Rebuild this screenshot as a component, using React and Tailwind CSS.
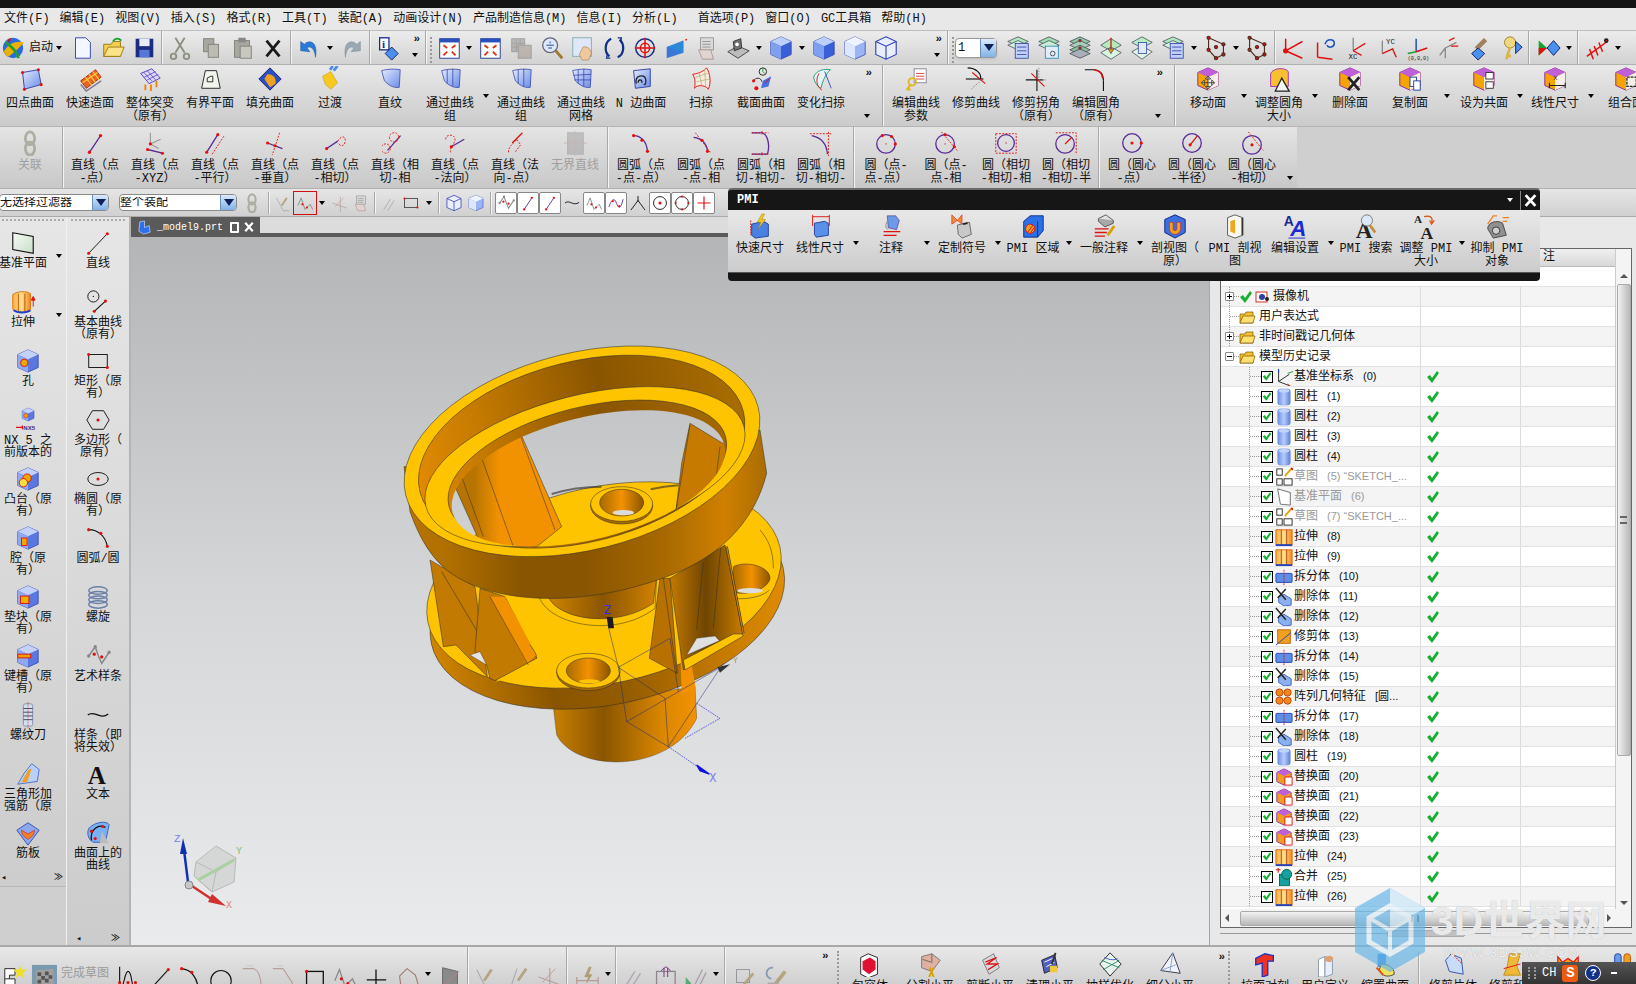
import React from "react";

const R = "#e01010";
const P = "#5a2a96";
const d = (x, y, r = 1.7) => <circle cx={x} cy={y} r={r} fill={R} />;
const cubeBody = (a = "#8fa8f0", b = "#5a78e0", c = "#c4d2fa") => (
  <>
    <path d="M14 2 25 7 25 21 14 26 3 21 3 7Z" fill={b} stroke="#3040a8" strokeWidth=".8" />
    <path d="M14 2 25 7 14 12 3 7Z" fill={c} />
    <path d="M3 7 14 12 14 26 3 21Z" fill={a} />
  </>
);
const faceCube = (extra) => (
  <>
    <path d="M14 2 25 7 25 21 14 26 3 21 3 7Z" fill="#f6a400" stroke="#8a2aa0" strokeWidth="1" />
    <path d="M14 2 25 7 14 12 3 7Z" fill="#c060d8" />
    <path d="M14 12 25 7 25 21 14 26Z" fill="#f4f0e8" />
    {extra}
  </>
);
const sheet = (extra) => (
  <>
    <path d="M5 5C12 3 19 3 25 4L24 23C17 24 12 20 8 16Z" fill="url(#sheetG)" stroke="#3040a8" strokeWidth=".8" />
    {extra}
  </>
);
const arc = (s) => <path d={s} fill="none" stroke={P} strokeWidth="1.4" />;
const dash = (s) => <path d={s} fill="none" stroke={R} strokeWidth="1" strokeDasharray="2 1.5" />;
const ln = (s, c = P, w = 1.4) => <path d={s} fill="none" stroke={c} strokeWidth={w} />;

const I = {
  start: (<><circle cx="14" cy="14" r="11" fill="#2a6ae0" /><path d="M4 18C10 8 18 6 26 8 20 14 14 20 8 24Z" fill="#f0b000" /><path d="M6 8C12 12 18 18 20 25" stroke="#20a030" strokeWidth="3" fill="none" /><path d="M8 5 12 3 10 9Z" fill={R} /></>),
  doc: (<path d="M7 3H18L23 8V25H7Z" fill="#f4f6ff" stroke="#3040a8" />),
  open: (<><path d="M4 10H12L14 7H22V23H4Z" fill="#f2cf50" stroke="#9a7a10" /><path d="M4 23 9 13H26L22 23Z" fill="#fae48a" stroke="#9a7a10" /><path d="M14 7C16 3 20 3 23 6" stroke="#18a030" strokeWidth="2" fill="none" /></>),
  save: (<><rect x="5" y="4" width="19" height="20" fill="#1c2c80" /><rect x="9" y="4" width="11" height="8" fill="#e8ecf8" /><rect x="9" y="16" width="11" height="8" fill="#5878d8" /></>),
  cut: (<g stroke="#8a9080" strokeWidth="2" fill="none"><path d="M9 3 19 19M19 3 9 19" /><circle cx="7" cy="23" r="3" /><circle cx="21" cy="23" r="3" /></g>),
  copy: (<><rect x="6" y="4" width="11" height="14" fill="#a8a8a0" stroke="#808078" /><rect x="11" y="10" width="11" height="14" fill="#bcbcb4" stroke="#808078" /></>),
  paste: (<><rect x="6" y="6" width="16" height="18" fill="#a8a8a0" stroke="#808078" /><rect x="10" y="3" width="8" height="5" fill="#888" /><rect x="12" y="12" width="12" height="13" fill="#c8c8c0" stroke="#808078" /></>),
  x: (<path d="M7 6 21 23M21 6 7 23" stroke="#1a1a1a" strokeWidth="3" />),
  undo: (<path d="M9 10C15 4 24 8 21 24 20 14 15 11 12 14L15 18 5 17 5 7Z" fill="#2a7ad8" stroke="#1a4aa0" strokeWidth=".5" />),
  redo: (<path d="M19 10C13 4 4 8 7 24 8 14 13 11 16 14L13 18 23 17 23 7Z" fill="#9aa8b4" stroke="#788" strokeWidth=".5" />),
  info: (<><rect x="5" y="3" width="10" height="13" fill="#fff" stroke="#1a2a90" strokeWidth="1.4" /><text x="7.5" y="14" fontSize="12" fontWeight="700" fill="#1a2a90" fontFamily="Liberation Serif">i</text><path d="M18 13 25 20 18 27 11 20Z" fill="#4a90f0" stroke="#10205a" /></>),
  fit: (<><rect x="4" y="4" width="21" height="21" fill="#fff" stroke="#1a3a90" /><rect x="4" y="4" width="21" height="4" fill="#2a50c0" /><path d="M8 11 12 14M21 11 17 14M8 22 12 18M21 22 17 18" stroke="#e03010" strokeWidth="2" /></>),
  grid: (<g opacity=".6"><rect x="4" y="4" width="14" height="14" fill="#9a9a9a" stroke="#777" /><path d="M9 4V18M13 4V18M4 9H18M4 13H18" stroke="#777" /><rect x="11" y="11" width="14" height="14" fill="#a89a90" stroke="#777" /></g>),
  zoom: (<><circle cx="12" cy="11" r="8" fill="#dce8fa" stroke="#667" strokeWidth="1.4" /><path d="M8 11H16M12 7V9M10 14H14" stroke="#1a3a90" /><path d="M18 17 25 25" stroke="#a07a30" strokeWidth="3" /></>),
  pan: (<><rect x="3" y="3" width="20" height="20" fill="#dfe8f8" stroke="#8aa" /><path d="M14 13C18 12 22 14 23 20L20 27H13L10 21Z" fill="#f0c8a0" stroke="#a07040" strokeWidth=".6" /></>),
  rotate: (<g fill="none" stroke="#10308a" strokeWidth="2.4"><path d="M20 5C26 10 25 21 18 24" /><path d="M9 23C3 18 4 7 11 4" /><path d="M18 3 22 3 21 8M10 25 6 25 7 20" strokeWidth="1.4" /></g>),
  rotp: (<g fill="none" strokeWidth="1.6"><circle cx="14" cy="14" r="10" stroke="#10308a" /><path d="M14 3V25M3 14H25" stroke={R} /><circle cx="14" cy="14" r="5" stroke={R} /></g>),
  persp: (<><path d="M4 13 22 6V19L4 25Z" fill="#3a78d8" /><path d="M4 13 16 9 22 6 22 19Z" fill="#1a9ad8" opacity=".5" />{d(25, 5, 1)}</>),
  layerBox: (<g opacity=".7" stroke="#777" fill="#d8d8d8"><rect x="7" y="3" width="14" height="13" /><path d="M9 7H18M9 10H18M9 13H18" /><path d="M5 16 18 16 21 26 9 26Z" fill="#e4d4d0" stroke="#a07a70" /></g>),
  shade: (<><path d="M3 18 14 12 26 17 14 25Z" fill="#bcbcbc" stroke="#444" /><path d="M9 7 17 4 18 14 10 17Z" fill="#707070" stroke="#333" /><circle cx="13" cy="10" r="2" fill="#fff" /></>),
  cubeS: cubeBody("#7fa0ee", "#3a60d8", "#bcd0fa"),
  cubeL: cubeBody("#dce6fc", "#9ab4f4", "#eef4ff"),
  cubeW: (<g fill="none" stroke="#3040b8" strokeWidth="1.2"><path d="M14 2 25 7 25 21 14 26 3 21 3 7Z" fill="#e8eefc" /><path d="M3 7 14 12 25 7M14 12V26" /></g>),
  layer1: (<g stroke="#445" strokeWidth=".8"><path d="M14 2 25 7 14 12 3 7Z" fill="#b0e8c0" /><path d="M3 11 14 16 25 11 14 6Z" fill="#d0f4dc" /><rect x="11" y="9" width="14" height="16" fill="#c0d0f8" stroke="#2030a0" /><path d="M13 13H23M13 17H23M13 21H23" stroke="#2030a0" /></g>),
  layer2: (<g stroke="#445" strokeWidth=".8"><path d="M14 2 25 7 14 12 3 7Z" fill="#a0dcb4" /><path d="M3 11 14 16 25 11 14 6Z" fill="#c8ecd4" /><rect x="10" y="12" width="14" height="13" fill="#e0ecf8" stroke="#1080a8" /><circle cx="18" cy="20" r="2.5" fill="none" stroke="#222" /></g>),
  layer3: (<g stroke="#445" strokeWidth=".8"><path d="M14 2 25 7 14 12 3 7Z" fill="#90c8a4" /><path d="M3 11 14 16 25 11 14 6Z" fill="#a8d0b8" /><path d="M3 16 14 21 25 16 14 11Z" fill="#8ac098" /><path d="M3 20 14 25 25 20 14 15Z" fill="#a8b0b8" />{d(14, 6, 1.4)}{d(14, 14, 1.4)}</g>),
  layer4: (<g stroke="#445" strokeWidth=".8"><path d="M14 4 25 11 14 17 3 11Z" fill="#b0ecbc" /><path d="M14 13 25 19 14 26 3 19Z" fill="#d8f6e0" /><path d="M14 3V18" stroke={R} strokeWidth="1.4" /><path d="M11 15 14 20 17 15Z" fill="#f0a000" /></g>),
  layer5: (<g stroke="#445" strokeWidth=".8"><path d="M14 2 25 8 14 14 3 8Z" fill="#b8ecc4" /><path d="M14 12 25 18 14 26 3 18Z" fill="#e0f6e6" /><rect x="10" y="8" width="9" height="12" fill="#e0e8fc" stroke="#2040a0" /></g>),
  wire: (<g fill="none" stroke="#4a2a20" strokeWidth="1.2"><path d="M6 3 22 10 22 21 14 25 6 16Z" />{d(6, 3)}{d(22, 10)}{d(22, 21)}{d(14, 25)}{d(6, 16)}{d(14, 13)}</g>),
  csys1: (<g fill="none" strokeWidth="1.6" stroke={R}><path d="M5 17 23 7M5 17 23 25" /><path d="M5 4V17" />{d(5, 17, 2)}</g>),
  csys2: (<g fill="none" strokeWidth="1.6" stroke={R}><path d="M6 24V8M6 24 22 26" /><path d="M14 10C16 3 24 4 24 9S18 14 16 11" stroke="#1c50c0" /></g>),
  csys3: (<g fill="none" strokeWidth="1.4"><path d="M11 17V3" stroke="#888" /><path d="M11 17 24 9" stroke={R} /><path d="M11 17 20 22" stroke={R} /><text x="6" y="26" fontSize="8" fill="#222" stroke="none">XC</text></g>),
  csys4: (<g fill="none" strokeWidth="1.4"><path d="M9 20V6" stroke="#888" /><path d="M9 20 20 15 24 24" stroke={R} /><text x="13" y="10" fontSize="8" fill="#222" stroke="none">YC</text></g>),
  csys5: (<g fill="none" strokeWidth="1.6"><path d="M12 18V4" stroke="#1c50c0" /><path d="M12 18 24 14" stroke={R} /><path d="M12 18 3 20" stroke="#18a030" /><text x="3" y="27" fontSize="5.5" fill="#222" stroke="none">(0,0,0)</text></g>),
  csys6: (<g fill="none" strokeWidth="1.4"><path d="M10 14V25M10 14 22 8M10 14 4 22" stroke="#888" /><path d="M14 6 20 3M16 12 24 12" stroke={R} /></g>),
  wcs: (<><path d="M10 15 20 5" stroke="#a08060" strokeWidth="5" /><path d="M12 14 19 20 12 27 5 20Z" fill="#4a90f0" stroke="#10205a" /></>),
  key: (<><circle cx="13" cy="8" r="6" fill="#f0d880" stroke="#a08020" /><path d="M13 13 9 26M9 22 14 23" stroke="#d8b840" strokeWidth="3" /><path d="M19 7 26 13 19 20Z" fill="#4a90f0" stroke="#10205a" /></>),
  play: (<><path d="M4 6 13 14 4 22Z" fill="#18a030" /><path d="M4 14 13 14 4 22Z" fill={R} /><path d="M20 6 27 14 20 22 13 14Z" fill="#4a90f0" stroke="#10205a" /></>),
  ant: (<g stroke="#1a1a2a" strokeWidth="1.6" fill="none"><path d="M3 23 25 7M10 26 6 15M15 22 11 12M20 18 16 8" stroke={R} />{d(24, 6)}</g>),
  chain: (<g fill="none" stroke="#9a9a8a" strokeWidth="3"><ellipse cx="14" cy="9" rx="5" ry="7" /><ellipse cx="14" cy="20" rx="5" ry="7" /></g>),
  fourpt: (<><path d="M6 7 23 4 26 20 8 25Z" fill="url(#sheetG)" stroke="#3040a8" />{d(6, 7)}{d(23, 4)}{d(26, 20)}{d(8, 25)}</>),
  quick: (<><path d="M4 16 20 4 26 12 10 24Z" fill="#f06020" stroke="#a03010" /><path d="M9 12 16 21M13 9 20 18M17 6 24 15M6 18 22 7" stroke="#f8d040" strokeWidth="1.2" /><path d="M4 20 10 27 26 16" fill="none" stroke="#7a7a90" strokeWidth="1.5" /></>),
  global: (<><path d="M4 8 16 3 25 13 13 19Z" fill="#d8d8fa" stroke="#5a3ac0" /><path d="M7 6.5 16 16M11 5 20 15M8 12 20 6M11 15 23 9" stroke="#5a3ac0" strokeWidth=".8" /><path d="M9 20V26M15 20V27M21 16V23" stroke="#f08010" strokeWidth="2" /></>),
  bounded: (<><path d="M5 24 9 5H21L25 24Z" fill="#f0f4ec" stroke="#222" /><path d="M11 17V13L15 11H17V17Z" fill="none" stroke="#222" /></>),
  fill: (<><path d="M14 2 26 14 14 26 2 14Z" fill="#2a50c0" stroke="#102080" /><path d="M11 9C17 8 21 13 20 19L14 23 8 14Z" fill="#f0a020" /></>),
  blend: (<><path d="M6 11 15 6 22 18 15 25 9 20Z" fill="#f6c820" stroke="#c09010" strokeWidth=".5" /><path d="M14 4 17 0M18 5 22 0" stroke="#4a8ae0" strokeWidth="3" /></>),
  ruled: sheet(),
  thru: sheet(ln("M11 4V19M17 3V22", "#3040a8", 0.8)),
  mesh: sheet(ln("M11 4V19M17 3V22M6 10 25 9M7 15 25 15", "#3040a8", 0.8)),
  nside: (<><path d="M6 5 24 3 24 22 8 24Z" fill="url(#sheetG)" stroke="#3040a8" /><path d="M9 19C6 10 18 8 19 14S18 20 17 20M11 18C11 14 15 14 15 18" fill="none" stroke="#222" strokeWidth="1.4" /></>),
  sweep: (<><path d="M5 9C12 8 18 5 20 2 24 8 25 18 22 25 18 20 10 20 7 24 8 18 8 14 5 9Z" fill="#f6eae0" stroke={R} /><path d="M8 12 21 8M9 17 23 14M12 7 15 22M18 5 19 21" stroke="#aa6" strokeWidth=".7" /></>),
  section: (<><circle cx="16" cy="6" r="4" fill="none" stroke="#222" /><path d="M16 2V6L18 8" stroke="#18a030" fill="none" /><path d="M6 16C8 12 14 12 15 17" stroke="#222" fill="none" />{d(6, 16)}{d(9, 24, 2.2)}<path d="M16 16 25 11 22 22 14 24Z" fill="#4a70e0" /><path d="M18 18 23 14" stroke={R} /></>),
  varsweep: (<><path d="M6 12C9 4 18 3 24 4 20 8 16 14 14 24 10 22 7 18 6 12Z" fill="#e8f4fa" stroke="#18a070" /><path d="M12 8C8 14 9 22 15 26" fill="none" stroke={R} /><path d="M18 6 25 24" stroke="#3050c0" /></>),
  editcp: (<><rect x="12" y="3" width="13" height="15" fill="#fff" stroke="#889" /><path d="M14 8H23M14 11H23M14 14H23" stroke="#d84040" /><circle cx="10" cy="17" r="4" fill="none" stroke="#e0b820" strokeWidth="2" /><path d="M8 20 4 26M5 24 8 26" stroke="#e0b820" strokeWidth="2.4" /></>),
  trimc: (<><path d="M3 14H22" stroke="#111" strokeWidth="1.2" /><path d="M5 2C14 2 20 8 19 14" fill="none" stroke="#111" strokeWidth="1.2" /><path d="M19 14C18 20 12 20 9 25" fill="none" stroke="#888" strokeDasharray="2 1.5" /><path d="M10 7 24 19" stroke={R} strokeWidth="1.2" /></>),
  trimk: (<><path d="M3 15H22M15 4V27" stroke="#111" strokeWidth="1.2" /><path d="M9 8 23 22" stroke={R} strokeWidth="1.2" /><path d="M17 2V13M17 15H25" stroke="#888" strokeDasharray="1.5 1.5" /></>),
  editf: (<><path d="M2 4H11C19 4 22 9 22 16" fill="none" stroke="#111" strokeWidth="1.2" /><path d="M12 4C18 5 21 9 21 13" fill="none" stroke={R} strokeWidth="1.6" /><path d="M22 16V27" stroke="#111" strokeWidth="1.2" /></>),
  moveF: faceCube(<path d="M14 11V25M7 18H21M14 11 11 14H17ZM14 25 11 22H17ZM7 18 10 15V21ZM21 18 18 15V21Z" fill="#eee" stroke="#222" strokeWidth=".8" />),
  resize: (<><path d="M5 8C8 2 20 1 24 6V22H5Z" fill="#f6c030" stroke="#a82ac0" /><path d="M17 13 25 27H10Z" fill="#f4f4f4" stroke="#222" strokeWidth="1.4" /></>),
  delF: faceCube(<path d="M12 12 24 26M24 12 12 26" stroke="#222" strokeWidth="3" />),
  copyF: faceCube(<><rect x="14" y="12" width="7" height="10" fill="#fff" stroke="#2040a0" /><rect x="18" y="16" width="7" height="10" fill="#fff" stroke="#2040a0" /></>),
  coplanar: faceCube(<><rect x="16" y="7" width="8" height="7" fill="#fff" stroke="#333" /><rect x="16" y="17" width="8" height="7" fill="#fff" stroke="#333" /></>),
  lineDim: faceCube(<><text x="12" y="15" fontSize="8" fill="#222">x</text><path d="M8 21H25M8 18V24M25 18V24" stroke="#222" strokeWidth="1.2" /></>),
  combF: faceCube(<rect x="15" y="12" width="10" height="10" fill="none" stroke="#222" strokeWidth="1.4" strokeDasharray="3 1" />),
  ptpt: (<>{ln("M8 24 20 6")}{d(8, 24, 1.8)}{d(20, 6, 1.8)}</>),
  lxyz: (<><path d="M9 15V3M9 15 20 10M9 15 18 20" stroke="#999" strokeWidth="1.2" fill="none" />{ln("M6 21 22 25")}{d(6, 21)}{d(22, 25)}{d(9, 15)}</>),
  lpar: (<>{ln("M5 24 17 5")}{d(5, 24)}{d(17, 5)}{dash("M11 26 24 6")}</>),
  lperp: (<>{ln("M6 14 22 20")}{d(6, 14)}{d(14, 17)}{dash("M19 3 11 27")}</>),
  ltan: (<>{ln("M5 20 17 12")}{d(5, 20)}{dash("M17 12C20 6 26 6 25 12S20 18 17 14")}</>),
  ltt: (<>{ln("M6 22 20 6")}{dash("M9 20A5 5 0 1 1 9 19.9M18 8A5 5 0 1 1 18 7.9")}</>),
  lpn: (<>{ln("M10 18 24 10")}{dash("M4 10C4 4 14 4 14 10S6 20 10 25")}{d(10, 18)}</>),
  lnp: (<>{dash("M7 24C7 16 14 14 16 10L20 16 14 24")}{ln("M11 14 22 3", R)}</>),
  linf: (<g opacity=".55"><rect x="6" y="3" width="17" height="23" fill="#8a8a8a" stroke="#777" /><path d="M2 14H27M14 1V28" stroke="#a07a70" /></g>),
  a3p: (<>{ln("M6 6C14 6 20 12 21 23")}{d(6, 6)}{d(15, 11)}{d(21, 23)}</>),
  a2p: (<>{ln("M6 8C14 9 20 14 21 23")}{dash("M8 3 24 24")}{d(15, 11)}{d(21, 23)}</>),
  a2t: (<>{ln("M4 3H14C21 3 24 16 21 26H4")}{dash("M4 3H22M4 26H22M15 1V5M15 24V28")}</>),
  a2t2: (<>{ln("M4 6C14 8 20 14 21 26")}{dash("M2 4H25M22 2V28")}</>),
  c3p: (<><circle cx="14" cy="15" r="10" fill="none" stroke={P} strokeWidth="1.4" />{d(10, 6)}{d(20, 7)}{d(24, 15)}{d(14, 15, .7)}</>),
  c2pt: (<><circle cx="13" cy="15" r="10" fill="none" stroke={P} strokeWidth="1.4" />{d(13, 5)}{d(23, 18)}{d(13, 15, .7)}{dash("M9 2 26 22")}</>),
  c3t: (<><circle cx="14" cy="14" r="9" fill="none" stroke={P} strokeWidth="1.4" />{dash("M3 4H25V25H3Z")}{d(14, 14, .7)}</>),
  c2tr: (<><circle cx="13" cy="15" r="10" fill="none" stroke={P} strokeWidth="1.4" />{dash("M3 3H25V25")}{ln("M13 15 20 8", R)}</>),
  cp: (<><circle cx="14" cy="14" r="10" fill="none" stroke={P} strokeWidth="1.4" />{d(14, 14)}{d(24, 14)}</>),
  cr: (<><circle cx="14" cy="14" r="10" fill="none" stroke={P} strokeWidth="1.4" />{ln("M12 16 20 6", R)}{d(12, 16)}</>),
  ct: (<><circle cx="14" cy="16" r="10" fill="none" stroke={P} strokeWidth="1.4" />{d(14, 16)}{dash("M10 2 26 22")}</>),
  // left bars
  datum: (<path d="M5 2 27 6 27 24 5 20Z" transform="translate(-2 1)" fill="url(#datumG)" stroke="#111" strokeWidth="1.2" />),
  extrude: (<><path d="M3 6C8 2 18 2 22 5V22C18 26 8 26 3 22Z" fill="url(#extG)" stroke="#e07000" /><path d="M9 5V24M16 5V24" stroke="#c05000" /><path d="M4 23C8 26 18 26 22 23" stroke="#2040c0" strokeWidth="2" fill="none" /><path d="M25 10V19M23 12 25 8 27 12Z" stroke={R} fill={R} /></>),
  hole: (<>{cubeBody()}<circle cx="10" cy="16" r="4" fill="#f0a800" stroke={R} /></>),
  nx5: (<><g transform="translate(6 0) scale(.58)">{cubeBody()}<circle cx="10" cy="16" r="4" fill="#f0a800" stroke={R} /></g><path d="M1 22H8M8 20V24" stroke={R} strokeWidth="1.4" /><text x="9" y="25" fontSize="6.5" fontWeight="700" fill="#303090" fontFamily="Liberation Sans">NX5</text></>),
  boss: (<>{cubeBody()}<circle cx="13" cy="13" r="4.5" fill="#f0a800" stroke={R} /><circle cx="9" cy="18" r="4.5" fill="#f6e040" stroke={R} /></>),
  pocket: (<>{cubeBody()}<rect x="7" y="14" width="6" height="8" fill="#f0a800" stroke={R} /></>),
  pad: (<>{cubeBody()}<rect x="6" y="13" width="9" height="8" fill="#f0b000" stroke={R} /></>),
  slot: (<>{cubeBody()}<rect x="3" y="12" width="14" height="4" fill="#f0a000" stroke={R} /></>),
  thread: (<><rect x="9" y="2" width="10" height="24" rx="2" fill="#d4e0f0" stroke="#8090b0" /><path d="M9 7H19M9 11H19M9 15H19M9 19H19" stroke="#445" /><path d="M14 0V28" stroke={R} strokeWidth=".6" strokeDasharray="2 1" /></>),
  gusset: (<><path d="M18 3 26 9 24 22 3 25 10 13Z" fill="#b8d0f8" stroke="#4a70c8" /><path d="M14 10 18 8 13 23H7Z" fill="#f0a020" /></>),
  rib: (<><path d="M14 2 26 10 14 26 2 10Z" transform="translate(0 1)" fill="#8ea8ec" stroke="#3050b0" /><path d="M7 11 14 15 21 11 20 16 14 21 8 16Z" fill="#f08020" stroke={R} strokeWidth=".6" /></>),
  sline: (<>{ln("M4 25 24 4", "#111", 1)}{d(4, 25)}{d(24, 4)}</>),
  sbasic: (<><circle cx="9" cy="8" r="6" fill="none" stroke="#111" /><circle cx="9" cy="8" r=".7" fill="#111" />{ln("M10 24 22 13", "#111", 1.2)}{d(10, 24)}{d(22, 13)}</>),
  srect: (<><rect x="4" y="7" width="20" height="14" fill="none" stroke="#111" />{d(4, 7)}{d(24, 21)}</>),
  spoly: (<><path d="M8 4H20L26 14 20 24H8L2 14Z" fill="none" stroke="#111" />{d(14, 14)}</>),
  sell: (<><ellipse cx="14" cy="14" rx="11" ry="7" fill="none" stroke="#111" />{d(14, 14)}</>),
  sarc: (<>{ln("M4 5C14 5 22 12 24 23", "#111", 1.2)}{d(4, 5)}{d(17, 9)}{d(24, 23)}</>),
  helix: (<g fill="none" stroke="#6a80a8" strokeWidth="1.6"><ellipse cx="14" cy="7" rx="10" ry="4" /><ellipse cx="14" cy="12" rx="10" ry="4" /><ellipse cx="14" cy="17" rx="10" ry="4" /><ellipse cx="14" cy="22" rx="10" ry="4" /></g>),
  art: (<><path d="M4 14 11 4 14 13 18 22 26 10" fill="none" stroke="#888" strokeWidth="1.6" />{d(10, 12)}{d(18, 15)}<circle cx="4" cy="14" r="1.8" fill="#888" /><circle cx="11" cy="4" r="1.8" fill="#888" /><circle cx="26" cy="10" r="1.8" fill="#888" /></>),
  spline: (<path d="M3 14C10 8 16 20 25 13" fill="none" stroke="#111" strokeWidth="1.4" />),
  stext: (<text x="3" y="25" fontSize="27" fontWeight="700" fill="#111" fontFamily="Liberation Serif">A</text>),
  curveOn: (<><path d="M4 9C12 1 24 1 26 5L22 24 9 24C3 21 2 14 4 9Z" fill="#7ab0f0" stroke="#3060c0" /><path d="M18 12 26 25H16Z" fill="#bcbcbc" /><path d="M7 22C5 10 15 4 22 8" fill="none" stroke="#111" strokeWidth="1.4" />{d(7, 12)}{d(19, 7)}{d(11, 20)}</>),
  // selection bar
  arch: (<path d="M3 25 14 10 25 25M14 3V12" fill="none" stroke="#111" strokeWidth="1.4" />),
  scirc: (<><circle cx="14" cy="14" r="10" fill="none" stroke="#111" strokeWidth="1.4" />{d(14, 14, 2.4)}</>),
  socto: (<><circle cx="14" cy="14" r="10" fill="none" stroke="#111" strokeWidth="1.4" />{d(14, 4)}{d(24, 14)}{d(14, 24)}{d(4, 14)}</>),
  scross: (<path d="M14 4V24M4 14H24" stroke={R} strokeWidth="1.8" />),
  swave: (<><path d="M3 20C8 6 12 6 15 15S22 22 25 8" fill="none" stroke={P} strokeWidth="1.4" />{d(9, 11)}{d(19, 19)}</>),
  // pmi
  rapid: (<><path d="M5 12 18 9 23 12V25L9 27 5 24Z" fill="#4a80e0" stroke="#2040a0" /><path d="M16 1 11 10H15L12 17 20 7H16L19 1Z" fill="#f0c820" stroke="#a08010" strokeWidth=".5" /><path d="M4 8V24" stroke={R} strokeDasharray="2 1" /></>),
  lindim: (<><path d="M8 11 19 9 23 11V24L10 26 8 23Z" fill="#5a90e8" stroke="#2040a0" /><path d="M6 2V14M6 4H24M24 2V14" stroke={R} /></>),
  note: (<><path d="M10 3 19 3 23 8 20 18 11 16Z" fill="#6a9ae8" stroke="#405" strokeWidth=".5" /><path d="M10 9C7 14 9 17 11 18" stroke="#888" fill="none" /><path d="M6 20H24M6 24H20" stroke={R} strokeWidth="1.4" /></>),
  symbol: (<><path d="M3 2 9 8 3 12ZM14 2 9 8 14 12Z" fill="#f09030" stroke={R} strokeWidth=".6" /><path d="M9 13 22 10 24 23 14 27 10 23Z" fill="#c8c8c8" stroke="#666" /><path d="M15 12 20 11" stroke="#222" strokeWidth="2" /></>),
  region: (<><path d="M4 9 11 3H25V19L19 26H4Z" fill="#2a70e8" stroke="#103080" /><path d="M19 9V26" stroke="#103080" /><circle cx="11" cy="17" r="5" fill="#f0a020" stroke={R} /><path d="M8 21 14 13M11 22 15 16" stroke={R} /></>),
  gnote: (<><path d="M8 6 16 2 24 8 15 13Z" fill="#e0e0e0" stroke="#555" /><path d="M8 6V9L15 15 24 11V8" fill="#a8a8a8" stroke="#555" /><path d="M4 17H19M4 21H17M4 25H15" stroke={R} strokeWidth="1.4" /><path d="M18 24 25 14" stroke="#d8a000" strokeWidth="3" /></>),
  secview: (<><path d="M14 2 25 7 25 21 14 27 3 21 3 7Z" fill="#3a70e0" stroke="#102080" /><path d="M8 10V17A6 6 0 0 0 20 17V10H16V17A2 2 0 0 1 12 17V10Z" fill="#f0a020" stroke={R} strokeWidth=".6" /></>),
  pmisec: (<><path d="M6 5 14 2 22 5V24L14 27 6 24Z" fill="#f8f8f0" stroke="#555" /><path d="M9 9 14 7V22L9 20Z" fill="#f0a818" /><path d="M22 5V24" stroke="#333" strokeWidth="2" /></>),
  aa: (<><text x="2" y="14" fontSize="15" fontWeight="700" fill="#1a2a90" fontFamily="Liberation Sans">A</text><text x="9" y="25" fontSize="24" fontWeight="700" fontStyle="italic" fill="#1a2ad0" fontFamily="Liberation Sans">A</text><path d="M7 27H25" stroke="#1a2ad0" /></>),
  asearch: (<><text x="3" y="27" fontSize="25" fontWeight="700" fill="#222" fontFamily="Liberation Serif">A</text><circle cx="15" cy="8" r="6" fill="#dce8f8" stroke="#777" /><path d="M18 13 24 21" stroke="#c09040" strokeWidth="3" /></>),
  aresize: (<><text x="1" y="11" fontSize="12" fontWeight="700" fill="#222" fontFamily="Liberation Serif">A</text><path d="M12 4C18 2 22 5 20 10M18 8 20 12 23 8" stroke="#e05010" strokeWidth="1.4" fill="none" /><text x="8" y="28" fontSize="19" fontWeight="700" fill="#222" fontFamily="Liberation Serif">A</text></>),
  suppress: (<><path d="M4 17C4 10 14 7 20 11L24 24 10 27Z" fill="#909090" stroke="#444" /><circle cx="13" cy="19" r="4" fill="#d0d0d0" stroke="#333" /><path d="M4 12 10 3H14M20 5H27M20 9H25" stroke="#f08020" strokeWidth="1.4" fill="none" /></>),
  // bottom
  sketchS: (<><path d="M3 5H14V12H8V16H14V27H3Z" fill="#fff" stroke="#222" /><path d="M3 16H8" stroke="#222" /><path d="M19 1 21 6 27 6 22 10 24 15 19 12 15 15 16 10 12 6 18 6Z" fill="#f0e020" /></>),
  flag: (<><rect x="1" y="1" width="27" height="27" fill="#7a9ab0" /><path d="M5 7 24 5 25 21 6 24Z" fill="#a0a0a0" /><path d="M7 9H11V13H7ZM15 8H19V12H15ZM11 13H15V17H11ZM19 12H23V16H19ZM7 17H11V21H7ZM15 16H19V20H15Z" fill="#555" /></>),
  bcurve: (<>{ln("M5 3V27C10 27 10 8 14 8 19 8 17 27 22 27", "#111", 1.2)}{d(5, 20)}{d(14, 20)}{d(22, 20)}</>),
  bline: (<>{ln("M4 28 24 6", "#111", 1.2)}{d(24, 6)}</>),
  barc: (<>{ln("M5 5C15 6 22 14 23 28", "#111", 1.4)}{d(5, 5)}{d(16, 9)}</>),
  bcir: (<circle cx="14" cy="18" r="11" fill="none" stroke="#111" strokeWidth="1.2" />),
  bfil: (<g opacity=".6">{ln("M4 5H16C21 7 24 13 24 28", "#a07a70", 1.2)}{ln("M8 2H16", "#bbb", 1)}</g>),
  bfil2: (<g opacity=".6">{ln("M3 5H14L24 20V28", "#a07a70", 1.2)}{ln("M8 2H14", "#bbb", 1)}</g>),
  brect: (<><rect x="6" y="8" width="18" height="18" fill="none" stroke="#111" strokeWidth="1.4" />{d(6, 8)}{d(24, 26)}</>),
  bart: (<><path d="M3 18 8 6 14 24 22 16 26 24" fill="none" stroke="#888" strokeWidth="1.4" />{d(10, 16)}{d(17, 21)}</>),
  bplus: (<path d="M14 6V28M4 17H25" stroke="#111" strokeWidth="1.4" />),
  bprof: (<path d="M6 13 14 5 23 12 26 22 18 28H8Z" fill="none" stroke="#a07a70" strokeWidth="1.2" />),
  bplane: (<><path d="M6 4 22 8V28L6 28Z" fill="#8a8a8a" stroke="#666" />{ln("M6 24 24 8", "#c08080", 1)}</>),
  bdim1: (<g opacity=".7">{ln("M4 6 14 26H24", "#888", 1)}<path d="M12 18 20 6" stroke="#a89060" strokeWidth="3" /></g>),
  bdim2: (<g opacity=".7">{ln("M14 5 7 26H24", "#888", 1)}<path d="M15 18 24 5" stroke="#a89060" strokeWidth="3" /></g>),
  bdim3: (<g opacity=".7">{ln("M4 14 26 22M16 4V28", "#a07a70", 1)}{ln("M22 5 8 20", "#c08080", 1)}</g>),
  bdim4: (<g opacity=".8">{ln("M3 18H26M3 14V28M26 14V28", "#a07a70", 1)}<path d="M16 3 11 14H15L13 22 20 11H16L19 3Z" fill="#a89060" /></g>),
  bcon1: (<g opacity=".7">{ln("M6 24 16 8M12 26 22 10", "#a090a0", 1.4)}</g>),
  bcon2: (<g opacity=".8"><rect x="6" y="8" width="20" height="22" fill="none" stroke="#807080" strokeWidth="1.4" /><path d="M14 4V14M18 4V14M11 7 16 3 21 7" fill="none" stroke="#606" strokeWidth="1" /></g>),
  bcon3: (<g opacity=".8"><path d="M4 14V28L10 21Z" fill="#38a060" />{ln("M14 22 22 6M18 25 26 9", "#a090a0", 1.4)}</g>),
  bedit1: (<g opacity=".7"><rect x="6" y="6" width="14" height="14" fill="none" stroke="#777" /><rect x="4" y="24" width="8" height="6" fill="#777" /><path d="M14 22 24 10" stroke="#a89060" strokeWidth="3" /></g>),
  bedit2: (<g opacity=".7"><path d="M12 4A6 6 0 1 0 10 16" fill="none" stroke="#6a80a8" strokeWidth="2" /><path d="M14 22 25 8" stroke="#a89060" strokeWidth="4" /><rect x="6" y="20" width="12" height="10" fill="#9a9a9a" /></g>),
  bwrap: (<><path d="M4 7 12 3 22 7 22 25 12 29 4 25Z" fill="#fff" stroke="#222" /><path d="M6 11 14 7 20 11 20 20 13 25 6 20Z" fill="#e01030" /></>),
  bsplit: (<><path d="M5 6 16 3 25 10 16 22 5 18Z" fill="#e0b0a0" stroke="#777" /><path d="M6 9 15 12M16 3V13" stroke="#666" /><path d="M14 18 18 28M18 18 13 28" stroke="#d8a000" strokeWidth="2" /></>),
  bcutf: (<><path d="M6 10 18 3 24 18 13 25Z" fill="#d8d8e0" stroke="#777" /><path d="M9 12 21 7 11 14 22 14 12 20" fill="none" stroke={R} strokeWidth="1.4" /></>),
  bclean: (<><path d="M5 10 19 4 22 18 8 24Z" fill="#5060c0" stroke="#222" /><path d="M8 12 17 8M10 17 19 12" stroke="#fff" /><path d="M20 2 16 14" stroke="#333" strokeWidth="2" /><rect x="14" y="16" width="8" height="7" fill="#f0c840" /></>),
  bsample: (<><path d="M14 2 26 14 14 27 3 14Z" fill="#e8f4f0" stroke="#222" /><path d="M5 10 24 18M7 20 24 10" stroke="#2a8a60" /><path d="M8 7C14 10 20 10 22 8" stroke="#3050c0" fill="none" /></>),
  bsubdiv: (<><path d="M17 2 25 24 4 21Z" fill="#f0f4fa" stroke="#334" /><path d="M17 2 14 22M4 21 20 15" stroke="#8aa0d0" /></>),
  bdraft: (<><path d="M4 8 14 3 23 5V11H17V26L11 28V13L4 15Z" fill="#f03020" stroke="#2030c0" strokeWidth="1.4" /></>),
  bcustom: (<><path d="M7 9 14 6V28H7Z" fill="#fff" stroke="#89a" /><path d="M14 6 22 9V25L14 28Z" fill="#e8eefc" stroke="#89a" /><path d="M14 8C16 4 22 4 23 8L20 12 14 11Z" fill="#e0a070" /></>),
  bbend: (<><rect x="6" y="3" width="9" height="14" fill="#3a80e0" /><path d="M10 14C16 14 24 17 24 25 17 29 10 27 8 20Z" fill="#f0e060" stroke="#444" /><path d="M5 18 12 26" stroke="#e05010" strokeWidth="2" /></>),
  btrim: (<><path d="M12 3 23 8 25 25 10 22 6 10Z" fill="#c8dcf8" stroke="#3050a0" /><path d="M13 3 24 14" stroke={R} strokeDasharray="2 1" /></>),
  btrimx: (<><path d="M10 3H22L18 16 22 26H4L8 16Z" fill="#f0b838" stroke="#c09010" /><path d="M4 19 22 14" stroke={R} /></>),
  bred: (<path d="M3 6 8 12 14 8 20 12 25 6V24H3Z" fill="#f0a020" stroke={R} strokeWidth="1.2" />),
  bcol: (<><rect x="5" y="3" width="7" height="24" rx="3" fill="#6a9ae8" stroke="#2040a0" /><rect x="15" y="3" width="7" height="24" rx="3" fill="#f0a020" stroke="#c05000" /></>),
  // tree
  csysT: (<g fill="none" strokeWidth="1.1"><path d="M4 3V16L16 8M4 16 17 21" stroke="#333" /><path d="M14 7 20 5" stroke="#18a030" /><path d="M14 19 19 23" stroke={R} /><path d="M4 2V6" stroke="#1040c0" /></g>),
  cylT: (<><rect x="3" y="2" width="14" height="18" rx="3" fill="url(#cylT)" stroke="#7090e0" strokeWidth=".6" /><ellipse cx="10" cy="4" rx="6" ry="2" fill="#c0d4fa" /></>),
  sketchT: (<><rect x="2" y="2" width="6" height="7" fill="#fff" stroke="#222" /><rect x="2" y="13" width="6" height="7" fill="#fff" stroke="#222" /><rect x="10" y="13" width="9" height="7" fill="#fff" stroke="#222" /><path d="M11 10 18 2" stroke="#e0a000" strokeWidth="2" /><path d="M18 1 20 3" stroke={R} strokeWidth="2" /></>),
  datumT: (<path d="M3 2 17 6 17 20 6 19Z" fill="#fff" stroke="#666" strokeWidth="1" />),
  extT: (<><rect x="1" y="3" width="18" height="17" fill="url(#extG)" stroke="#e06000" /><path d="M7 3V20M13 3V20" stroke="#b04000" /><path d="M1 20H19" stroke="#2040c0" strokeWidth="2" /></>),
  splitT: (<><rect x="1" y="7" width="18" height="10" rx="1" fill="#5a90e8" stroke="#2040c0" /><path d="M10 3V20" stroke={R} strokeDasharray="2 1" /></>),
  delT: (<><path d="M10 8 18 13 18 20 10 21 4 17 4 11Z" fill="#8ab0f0" stroke="#4060c0" /><path d="M1 1 12 14M12 2 3 12" stroke="#222" strokeWidth="1.6" /></>),
  trimT: (<><rect x="3" y="3" width="14" height="15" fill="#f0a020" stroke="#c06000" /><path d="M1 20 18 6" stroke="#2040c0" /></>),
  arrT: (<>{[[5, 6], [14, 6], [5, 15], [14, 15]].map(([x, y]) => <circle key={x + "-" + y} cx={x} cy={y} r="4" fill="#f08820" stroke="#c04000" />)}</>),
  faceT: (<><path d="M10 2 18 6 18 16 10 20 2 16 2 6Z" fill="#f0a020" stroke="#8a2aa0" /><path d="M10 2 18 6 10 10 2 6Z" fill="#c060d8" /><path d="M11 11H19V20H11Z" fill="#fff" stroke={R} /></>),
  uniteT: (<><rect x="5" y="8" width="11" height="13" fill="#18a0a0" stroke="#063" /><circle cx="13" cy="8" r="5.5" fill="#18a0a0" stroke="#063" /><path d="M1 3H6M3.5 1V6" stroke={R} strokeWidth="1.2" /></>),
};

function Ic({ k, s = 26, className = "" }) {
  return (
    <svg viewBox="0 0 28 28" className={className} width={s} height={s}>
      {I[k]}
    </svg>
  );
}

// tree icons use a 20 box
function Tc({ k }) {
  return (
    <svg viewBox="0 0 20 22" width="18" height="20">
      {I[k]}
    </svg>
  );
}

function Caret({ className = "" }) {
  return <span className={`block w-0 h-0 border-x-[3px] border-t-[4px] border-x-transparent border-t-black ${className}`} />;
}

function CloseX({ s = 12 }) {
  return (
    <svg viewBox="0 0 12 12" width={s} height={s}>
      <path d="M1.5 1 10.5 11M10.5 1 1.5 11" stroke="#fff" strokeWidth="2.6" />
    </svg>
  );
}

function Sep({ dotted }) {
  return (
    <span className="flex h-full flex-none">
      <span className="w-px h-full bg-[#a8a8a8]" />
      <span className="w-px h-full bg-[#f4f4f4]" />
      {dotted && <span className="ml-[3px] mt-[6px] h-[80%] border-l-2 border-dotted border-[#999]" />}
    </span>
  );
}

function Item({ label, k, dim, top = "h-[32px]", w = "w-[60px]" }) {
  return (
    <div className={`flex-none ${w} flex flex-col items-center`}>
      <div className={`${top} flex items-start justify-center ${dim ? "opacity-70" : ""}`}>
        <Ic k={k} />
      </div>
      <div className={`text-[12px] leading-[12.5px] text-center whitespace-pre-line ${dim ? "text-[#a0a0a0]" : "text-[#111]"}`}>{label}</div>
    </div>
  );
}

function Row({ items, top }) {
  return items.map((it, i) => {
    if (it.gap !== undefined)
      return (
        <div key={i} className={`flex-none ${it.gap} self-stretch -mt-[3px] flex ${it.center ? "justify-center" : "justify-end"}`}>
          {it.sep && <Sep dotted={it.dotted} />}
        </div>
      );
    if (it.more)
      return (
        <div key={i} className={`flex-none ${it.more} self-stretch relative`}>
          <span className="absolute right-[8px] top-[1px] text-[11px] leading-[12px] font-bold">»</span>
          <Caret className="absolute right-[10px] bottom-[8px]" />
        </div>
      );
    if (it.caret)
      return (
        <div key={i} className={`flex-none ${it.caret} pt-[28px] flex justify-center`}>
          <Caret />
        </div>
      );
    return <Item key={i} top={top} {...it} />;
  });
}

const it = (label, k, extra = {}) => ({ label, k, ...extra });
const C = { caret: "w-[11px]" };

const row1 = [
  it("四点曲面", "fourpt"), it("快速造面", "quick"), it("整体突变\n（原有）", "global"), it("有界平面", "bounded"), it("填充曲面", "fill"), it("过渡", "blend"), it("直纹", "ruled"),
  it("通过曲线\n组", "thru"), C, it("通过曲线\n组", "thru"), it("通过曲线\n网格", "mesh"), it("N 边曲面", "nside"), it("扫掠", "sweep"), it("截面曲面", "section"), it("变化扫掠", "varsweep"),
  { more: "w-[29px]" }, { gap: "w-[6px]", sep: true, center: true },
  it("编辑曲线\n参数", "editcp"), it("修剪曲线", "trimc"), it("修剪拐角\n（原有）", "trimk"), it("编辑圆角\n（原有）", "editf"),
  { more: "w-[45px]" }, { gap: "w-[7px]", sep: true, center: true },
  it("移动面", "moveF"), C, it("调整圆角\n大小", "resize"), C, it("删除面", "delF"), it("复制面", "copyF"), { caret: "w-[14px]" }, it("设为共面", "coplanar"), C, it("线性尺寸", "lineDim"), C, it("组合面", "combF"),
];

const row2 = [
  it("关联", "chain", { dim: true }), { gap: "w-[5px]", sep: true, center: true },
  it("直线（点\n-点）", "ptpt"), it("直线（点\n-XYZ）", "lxyz"), it("直线（点\n-平行）", "lpar"), it("直线（点\n-垂直）", "lperp"), it("直线（点\n-相切）", "ltan"), it("直线（相\n切-相", "ltt"), it("直线（点\n-法向）", "lpn"), it("直线（法\n向-点）", "lnp"), it("无界直线", "linf", { dim: true }),
  { gap: "w-[6px]", sep: true, center: true },
  it("圆弧（点\n-点-点）", "a3p"), it("圆弧（点\n-点-相", "a2p"), it("圆弧（相\n切-相切-", "a2t"), it("圆弧（相\n切-相切-", "a2t2"),
  { gap: "w-[5px]", sep: true, center: true },
  it("圆（点-\n点-点）", "c3p"), it("圆（点-\n点-相", "c2pt"), it("圆（相切\n-相切-相", "c3t"), it("圆（相切\n-相切-半", "c2tr"),
  { gap: "w-[6px]", sep: true, center: true },
  it("圆（圆心\n-点）", "cp"), it("圆（圆心\n-半径）", "cr"), it("圆（圆心\n-相切）", "ct"),
];

const pmi = [
  it("快速尺寸", "rapid"), it("线性尺寸", "lindim"), C, it("注释", "note"), C, it("定制符号", "symbol"), C, it("PMI 区域", "region"), C, it("一般注释", "gnote"), C, it("剖视图（\n原）", "secview"), it("PMI 剖视\n图", "pmisec"), it("编辑设置", "aa"), C, it("PMI 搜索", "asearch"), it("调整 PMI\n大小", "aresize"), C, it("抑制 PMI\n对象", "suppress"),
];

const leftA = [
  ["基准平面", "datum"], ["拉伸", "extrude"], ["孔", "hole"], ["NX 5 之\n前版本的", "nx5"], ["凸台（原\n有）", "boss"], ["腔（原\n有）", "pocket"], ["垫块（原\n有）", "pad"], ["键槽（原\n有）", "slot"], ["螺纹刀", "thread"], ["三角形加\n强筋（原", "gusset"], ["筋板", "rib"],
];
const leftB = [
  ["直线", "sline"], ["基本曲线\n（原有）", "sbasic"], ["矩形（原\n有）", "srect"], ["多边形（\n原有）", "spoly"], ["椭圆（原\n有）", "sell"], ["圆弧/圆", "sarc"], ["螺旋", "helix"], ["艺术样条", "art"], ["样条（即\n将失效）", "spline"], ["文本", "stext"], ["曲面上的\n曲线", "curveOn"],
];

const T = (k) => ({ k });
const G = (w, sep = true, dotted = false) => ({ g: w, sep, dotted });
const CR = (w = "w-[12px]") => ({ cr: w });
const top = [
  G("w-[5px]"), T("cut"), T("copy"), T("paste"), T("x"), G("w-[5px]"), T("undo"), CR(), T("redo"), G("w-[5px]"), T("info"),
  { mm: "w-[20px]" }, G("w-[10px]", true, true), T("fit"), CR("w-[10px]"), T("fit"), T("grid"), T("zoom"), T("pan"), T("rotate"), T("rotp"), T("persp"), T("layerBox"), T("shade"), CR(), T("cubeS"), CR(), T("cubeS"), T("cubeL"), T("cubeW"), { mm: "w-[44px]" }, G("w-[10px]", true, true),
  { combo: true }, G("w-[5px]", false), T("layer1"), T("layer2"), T("layer3"), T("layer4"), T("layer5"), T("layer1"), CR(), T("wire"), CR("w-[10px]"), T("wire"), G("w-[6px]"),
  T("csys1"), T("csys2"), T("csys3"), T("csys4"), T("csys5"), T("csys6"), T("wcs"), T("key"), G("w-[6px]"), T("play"), CR(), G("w-[6px]"), T("ant"), CR(),
];

function Toolbar({ data, s = 26, up = "" }) {
  return data.map((t, i) => {
    if (t.k) return <div key={i} className="flex-none w-[31px] flex justify-center"><Ic k={t.k} s={s} /></div>;
    if (t.g) return <div key={i} className={`flex-none ${t.g} ${up} self-stretch flex justify-center`}>{t.sep && <Sep dotted={t.dotted} />}</div>;
    if (t.cr) return <div key={i} className={`flex-none ${t.cr} flex justify-center self-center`}><Caret /></div>;
    if (t.mm)
      return (
        <div key={i} className={`flex-none ${t.mm} self-stretch relative`}>
          <span className="absolute right-[3px] top-[2px] text-[11px] leading-[12px] font-bold">»</span>
          <Caret className="absolute right-[5px] bottom-[7px]" />
        </div>
      );
    if (t.combo)
      return (
        <div key={i} className="flex-none w-[42px] h-[20px] flex items-center bg-white rounded-sm border border-[#999] shadow-sm">
          <span className="pl-[2px] text-[12px] flex-1 leading-none">1</span>
          <ComboBtn />
        </div>
      );
    return null;
  });
}

function ComboBtn() {
  return (
    <span className="w-[16px] h-full flex items-center justify-center bg-gradient-to-b from-[#dcebfb] to-[#7fb2e6] border-l border-[#6a90b8]">
      <span className="block w-0 h-0 border-x-[5px] border-t-[7px] border-x-transparent border-t-[#10205a]" />
    </span>
  );
}

function Combo({ text, className }) {
  return (
    <div className={`flex-none h-[17px] flex items-center bg-white rounded-sm border border-[#8a8a8a] overflow-hidden ${className}`}>
      <span className="flex-1 text-[12px] leading-none whitespace-nowrap overflow-hidden">{text}</span>
      <ComboBtn />
    </div>
  );
}

function Small({ k, boxed, red }) {
  return (
    <div className={`flex-none w-[22px] h-[22px] flex items-center justify-center ${boxed ? "bg-white border border-[#888] rounded-[2px]" : ""} ${red ? "outline outline-1 outline-[#d01010]" : ""}`}>
      <Ic k={k} s={18} />
    </div>
  );
}

const hist = [
  ["基准坐标系", "(0)", "csysT"], ["圆柱", "(1)", "cylT"], ["圆柱", "(2)", "cylT"], ["圆柱", "(3)", "cylT"], ["圆柱", "(4)", "cylT"],
  ["草图", "(5) “SKETCH_...", "sketchT", 1], ["基准平面", "(6)", "datumT", 1], ["草图", "(7) “SKETCH_...", "sketchT", 1],
  ["拉伸", "(8)", "extT"], ["拉伸", "(9)", "extT"], ["拆分体", "(10)", "splitT"], ["删除体", "(11)", "delT"], ["删除体", "(12)", "delT"], ["修剪体", "(13)", "trimT"], ["拆分体", "(14)", "splitT"], ["删除体", "(15)", "delT"],
  ["阵列几何特征", "[圆...", "arrT"], ["拆分体", "(17)", "splitT"], ["删除体", "(18)", "delT"], ["圆柱", "(19)", "cylT"],
  ["替换面", "(20)", "faceT"], ["替换面", "(21)", "faceT"], ["替换面", "(22)", "faceT"], ["替换面", "(23)", "faceT"],
  ["拉伸", "(24)", "extT"], ["合并", "(25)", "uniteT"], ["拉伸", "(26)", "extT"],
];

function Tick({ s = 14 }) {
  return (
    <svg viewBox="0 0 14 14" width={s} height={s}>
      <path d="M1 7 4 5 6 8 11 1 13 3 6 13Z" fill="#18b030" />
    </svg>
  );
}

function Folder() {
  return (
    <svg viewBox="0 0 17 16" width="17" height="16" className="flex-none">
      <path d="M1 5H6L7 3H14V14H1Z" fill="#f0c030" stroke="#805800" strokeWidth=".7" />
      <path d="M1 14 4 7H16L14 14Z" fill="#ffe070" stroke="#805800" strokeWidth=".7" />
    </svg>
  );
}

function Exp({ minus }) {
  return (
    <span className="relative block flex-none w-[9px] h-[9px] bg-white border border-[#888] rounded-[1px]">
      <span className="absolute left-[1px] right-[1px] top-[3px] h-px bg-black" />
      {!minus && <span className="absolute top-[1px] bottom-[1px] left-[3px] w-px bg-black" />}
    </span>
  );
}

function TreeRow({ odd, children, tick }) {
  return (
    <div className={`flex h-[20px] flex-none border-b border-[#e2e2e2] ${odd ? "bg-[#f4f4f4]" : "bg-white"}`}>
      <div className="relative w-[200px] flex-none flex items-center border-r border-[#dcdcdc] text-[12px] whitespace-nowrap overflow-hidden">{children}</div>
      <div className="w-[100px] flex-none border-r border-[#dcdcdc] flex items-center pl-[5px]">{tick && <Tick />}</div>
      <div className="flex-1" />
    </div>
  );
}

function Chk() {
  return (
    <span className="flex-none w-[12px] h-[12px] bg-white border border-black flex items-center justify-center">
      <Tick s={11} />
    </span>
  );
}

function Vline() {
  return <span className="absolute left-[8px] top-0 h-full border-l border-dotted border-[#999]" />;
}

const bottomIcons = [
  T("bcurve"), T("bline"), T("barc"), T("bcir"), T("bfil"), T("bfil2"), T("brect"), T("bart"), T("bplus"), T("bprof"), CR(), T("bplane"), G("w-[5px]"),
  T("bdim1"), T("bdim2"), T("bdim3"), G("w-[8px]"), T("bdim4"), CR(), G("w-[3px]"), T("bcon1"), T("bcon2"), T("bcon3"), CR(), G("w-[6px]"), T("bedit1"), T("bedit2"),
];

const orange = { y: "#ffc400", o: "#f39200", l: "#2c2c2c" };

function Model() {
  return (
    <svg viewBox="0 0 1320 1380" className="absolute left-[249px] top-[93px] w-[440px] h-[460px]">
      <defs>
        <linearGradient id="bandG" gradientUnits="userSpaceOnUse" x1="72" x2="1165" y1="0" y2="0">
          <stop offset="0" stopColor="#b87400" /><stop offset=".12" stopColor="#b07000" /><stop offset=".32" stopColor="#8a5500" /><stop offset=".5" stopColor="#8a5500" /><stop offset=".72" stopColor="#a86a00" /><stop offset=".88" stopColor="#d08000" /><stop offset="1" stopColor="#a86c00" />
        </linearGradient>
        <linearGradient id="wallG" gradientUnits="userSpaceOnUse" x1="110" x2="1100" y1="0" y2="0">
          <stop offset="0" stopColor="#e08a00" /><stop offset=".2" stopColor="#c87c00" /><stop offset=".6" stopColor="#8a5500" /><stop offset="1" stopColor="#a86c00" />
        </linearGradient>
        <linearGradient id="flangeG" gradientUnits="userSpaceOnUse" x1="145" x2="1220" y1="0" y2="0">
          <stop offset="0" stopColor="#d08400" /><stop offset=".3" stopColor="#8a5500" /><stop offset=".5" stopColor="#945c00" /><stop offset=".8" stopColor="#c87c00" /><stop offset="1" stopColor="#e08c00" />
        </linearGradient>
        <linearGradient id="cylG" gradientUnits="userSpaceOnUse" x1="520" x2="950" y1="0" y2="0">
          <stop offset="0" stopColor="#c88000" /><stop offset=".35" stopColor="#8a5500" /><stop offset=".75" stopColor="#d88600" /><stop offset="1" stopColor="#f39200" />
        </linearGradient>
        <linearGradient id="colG" gradientUnits="userSpaceOnUse" x1="225" x2="450" y1="0" y2="0">
          <stop offset="0" stopColor="#b87400" /><stop offset=".25" stopColor="#b87400" /><stop offset=".6" stopColor="#f39200" /><stop offset="1" stopColor="#f39200" />
        </linearGradient>
        <linearGradient id="holeG" x1="0" x2="1" y1="0" y2="0">
          <stop offset="0" stopColor="#a86a00" /><stop offset=".5" stopColor="#f39200" /><stop offset="1" stopColor="#8a5500" />
        </linearGradient>
        <linearGradient id="ribDark" gradientUnits="userSpaceOnUse" x1="870" x2="1085" y1="0" y2="0">
          <stop offset="0" stopColor="#c47a00" /><stop offset=".5" stopColor="#6e4500" /><stop offset="1" stopColor="#c47a00" />
        </linearGradient>
        <mask id="ringHole" maskUnits="userSpaceOnUse" x="0" y="0" width="1320" height="1380">
          <rect width="1320" height="1380" fill="#fff" />
          <ellipse cx="625" cy="445" rx="420" ry="183" transform="rotate(-14 625 445)" fill="#000" />
        </mask>
      </defs>
      {/* lower cylinder */}
      <path d="M520 1130 530 1215C590 1330 870 1330 950 1165L945 1070Z" fill="url(#cylG)" stroke={orange.l} strokeWidth="1" />
      {/* flange */}
      <g stroke={orange.l} strokeWidth="1.5">
        <ellipse cx="682" cy="828" rx="540" ry="295" transform="rotate(-12 682 828)" fill="url(#flangeG)" />
        <ellipse cx="672" cy="765" rx="540" ry="295" transform="rotate(-12 672 765)" fill={orange.y} />
      </g>
      <path d="M515 492C560 478 610 470 665 470M812 478C840 472 870 468 895 466" stroke={orange.l} strokeWidth="6" fill="none" opacity=".6" />
      {/* top boss */}
      <g stroke={orange.l} strokeWidth="1.5">
        <ellipse cx="725" cy="528" rx="93" ry="54" fill="#a86a00" />
        <ellipse cx="725" cy="522" rx="93" ry="52" fill={orange.y} />
        <ellipse cx="725" cy="518" rx="66" ry="40" fill="url(#holeG)" />
      </g>
      <ellipse cx="730" cy="548" rx="32" ry="8" fill="#dcdcdc" />
      {/* bottom boss */}
      <g stroke={orange.l} strokeWidth="1.5">
        <ellipse cx="625" cy="1028" rx="95" ry="54" fill="#a86a00" />
        <ellipse cx="625" cy="1022" rx="95" ry="52" fill={orange.y} />
        <ellipse cx="625" cy="1022" rx="66" ry="38" fill="url(#holeG)" />
      </g>
      <ellipse cx="628" cy="1054" rx="32" ry="6" fill={orange.y} />
      {/* right hole */}
      <path d="M1060 710C1100 690 1170 710 1170 745 1165 780 1090 800 1060 785Z" fill="url(#holeG)" stroke={orange.l} strokeWidth="1.5" />
      <ellipse cx="1110" cy="782" rx="38" ry="8" fill="#dcdcdc" />
      <path d="M1060 805C1100 810 1150 800 1168 780M1140 600C1165 630 1180 660 1180 715" stroke={orange.l} strokeWidth="1.5" fill="none" />
      {/* centre boss */}
      <path d="M478 800C500 880 700 930 825 835L830 740 478 770Z" fill={orange.y} stroke={orange.l} strokeWidth="1.5" />
      <path d="M505 800C530 865 700 900 820 820L830 740 500 770Z" fill="url(#cylG)" stroke={orange.l} strokeWidth="1.5" />
      {/* back columns seen through the ring */}
      <path d="M225 470 310 660 400 660 470 650 545 590 415 295 300 370Z" fill="url(#colG)" stroke={orange.l} strokeWidth="1.5" />
      <path d="M245 440 310 620M300 370 400 650M415 300 525 600" stroke={orange.l} strokeWidth="1.5" fill="none" />
      <path d="M930 280 1045 350 1045 440 885 565 905 400Z" fill="#c67b00" stroke={orange.l} strokeWidth="1.5" />
      <path d="M930 285 885 560M1020 350 1005 470" stroke={orange.l} strokeWidth="1.5" fill="none" />
      {/* ribs under the ring */}
      <path d="M900 940 925 945 948 1080 905 1090Z" fill={orange.o} />
      <path d="M150 690 190 950 228 945 322 1040 285 770Z" fill="#c27a00" stroke={orange.l} strokeWidth="1.5" />
      <path d="M185 725 310 935" stroke={orange.l} strokeWidth="1.5" />
      <path d="M285 965 320 1005 330 1045 345 1052 470 985 375 800 300 775Z" fill="#c27a00" stroke={orange.l} strokeWidth="1.5" />
      <path d="M375 800 470 975 440 1000 330 800Z" fill={orange.o} />
      <path d="M470 985C470 970 460 960 450 945M330 800 445 1005" stroke={orange.l} strokeWidth="1.5" fill="none" />
      <path d="M270 975 300 965 320 1005Z" fill="#e2e3e4" stroke={orange.l} />
      <path d="M840 745 808 985 892 1030 870 745Z" fill="#b87000" stroke={orange.l} strokeWidth="1.5" />
      <path d="M870 745 910 1020 1088 910 1035 645Z" fill="url(#ribDark)" stroke={orange.l} strokeWidth="1.5" />
      <path d="M970 695 950 900M1022 655 1000 895M850 745 890 1030" stroke={orange.l} strokeWidth="1.5" fill="none" />
      <path d="M920 975 950 925 1005 918 1018 932Z" fill="#dfe0e1" stroke={orange.l} />
      <path d="M915 1020 910 990 1060 912 1085 912 1090 918Z" fill={orange.y} stroke={orange.l} strokeWidth="1.5" />
      <path d="M1040 650 1090 910" stroke={orange.l} strokeWidth="7" />
      <path d="M1040 650 1090 910" stroke="#c67b00" strokeWidth="4" />
      <path d="M370 1040 345 1055 390 1045Z" fill={orange.y} />
      {/* ring */}
      <g mask="url(#ringHole)" stroke={orange.l} strokeWidth="1.5">
        <path d="M72 410 90 545C110 600 140 670 200 720 340 830 620 830 860 740 1000 690 1120 590 1160 430L1140 300Z" fill="url(#bandG)" />
        <ellipse cx="606" cy="364" rx="545" ry="296" transform="rotate(-14 606 364)" fill={orange.y} />
        <ellipse cx="605" cy="365" rx="500" ry="271" transform="rotate(-14 605 365)" fill="url(#wallG)" />
        <ellipse cx="615" cy="410" rx="492" ry="215" transform="rotate(-14 615 410)" fill={orange.y} />
        <ellipse cx="622" cy="425" rx="428" ry="194" transform="rotate(-14 622 425)" fill="url(#wallG)" />
      </g>
      {/* datum csys */}
      <g fill="none" stroke="#1c2a78" strokeWidth="1.5">
        <path d="M685 890 715 1012 740 1175 865 1250 1030 1000M715 1012 870 925 895 1085M715 1012 855 1105 865 1250M740 1175 1025 1010" />
      </g>
      <path d="M950 1120 1020 1165 915 1225M865 1250 960 1315" fill="none" stroke="#1a1ae0" strokeWidth="2" strokeDasharray="5 3" />
      <path d="M950 1305 960 1322 988 1332Z" fill="#1010e0" stroke="#1010e0" strokeWidth="4" />
      <path d="M680 860 698 862 702 895 685 895Z" fill="#1c1c1c" />
      <path d="M1012 1012 1050 1003 1020 1028Z" fill="#333" />
      <text x="988" y="1355" fontSize="36" fill="#7a80f0" fontFamily="Liberation Mono">X</text>
      <text x="672" y="852" fontSize="36" fill="#2a2af0" fontFamily="Liberation Mono">Z</text>
      <text x="1058" y="998" fontSize="26" fill="#a09a80" fontFamily="Liberation Mono">Y</text>
    </svg>
  );
}

function Triad() {
  return (
    <svg viewBox="0 0 70 80" className="absolute left-[43px] top-[593px] w-[70px] h-[80px]">
      <g fill="#c8cbc8" fillOpacity=".55" stroke="#b8bab8">
        <path d="M22 32 42 16 62 28 60 52 38 62 20 46Z" />
        <path d="M22 32 42 42 62 28M42 42 38 62M20 46 38 62" fill="none" />
      </g>
      <path d="M24 50 60 30" stroke="#a8d0a0" strokeWidth="3" />
      <path d="M14 52 10 20" stroke="#1030b0" strokeWidth="2.5" />
      <path d="M6 24 9 8 13 24Z" fill="#1030b0" />
      <path d="M18 56 42 72" stroke="#d03030" strokeWidth="2.5" />
      <path d="M38 64 52 76 34 72Z" fill="#d03030" />
      <circle cx="15" cy="55" r="4" fill="#c8c8c8" stroke="#888" />
      <text x="0" y="12" fontSize="11" fill="#8080f0" fontFamily="Liberation Mono">Z</text>
      <text x="62" y="24" fontSize="10" fill="#80c080" fontFamily="Liberation Mono">Y</text>
      <text x="52" y="78" fontSize="10" fill="#e08080" fontFamily="Liberation Mono">X</text>
    </svg>
  );
}

export default function App() {
  return (
    <div className="relative w-[1636px] h-[984px] overflow-hidden flex flex-col bg-[#e4e4e4] text-[#111] font-['Liberation_Mono','Noto_Sans_CJK_SC',monospace]">
      <svg className="absolute w-0 h-0">
        <defs>
          <linearGradient id="sheetG" x1="0" x2="1" y1="0" y2="1"><stop offset="0" stopColor="#e4ecfc" /><stop offset="1" stopColor="#6a8ae8" /></linearGradient>
          <linearGradient id="datumG" x1="0" x2="1" y1="0" y2="1"><stop offset="0" stopColor="#f6faf4" /><stop offset="1" stopColor="#c8e0c8" /></linearGradient>
          <linearGradient id="extG" x1="0" x2="1" y1="0" y2="0"><stop offset="0" stopColor="#f8b040" /><stop offset=".5" stopColor="#fce090" /><stop offset="1" stopColor="#f08820" /></linearGradient>
          <linearGradient id="cylT" x1="0" x2="1" y1="0" y2="0"><stop offset="0" stopColor="#6a90e8" /><stop offset=".5" stopColor="#b8ccf8" /><stop offset="1" stopColor="#5a80e0" /></linearGradient>
        </defs>
      </svg>

      {/* title bar */}
      <div className="h-[8px] flex-none bg-[#141414]" />

      {/* menu */}
      <div className="h-[23px] flex-none flex items-center gap-[10px] pl-[4px] bg-[#e8e8e8] border-b border-[#bdbdbd] text-[12px] whitespace-nowrap">
        {["文件(F)", "编辑(E)", "视图(V)", "插入(S)", "格式(R)", "工具(T)", "装配(A)", "动画设计(N)", "产品制造信息(M)", "信息(I)", "分析(L)"].map((m) => (
          <span key={m}>{m}</span>
        ))}
        <span className="ml-[10px]">首选项(P)</span>
        <span>窗口(O)</span>
        <span>GC工具箱</span>
        <span>帮助(H)</span>
      </div>

      {/* main toolbar */}
      <div className="h-[34px] flex-none flex items-center bg-gradient-to-b from-[#ececec] to-[#d2d2d2] border-b border-[#b0b0b0]">
        <div className="flex-none w-[66px] flex items-center">
          <Ic k="start" s={26} />
          <span className="text-[12px] ml-[3px]">启动</span>
          <Caret className="ml-[3px]" />
        </div>
        <div className="flex-none w-[31px] flex justify-center"><Ic k="doc" /></div>
        <div className="flex-none w-[31px] flex justify-center"><Ic k="open" /></div>
        <div className="flex-none w-[31px] flex justify-center"><Ic k="save" /></div>
        <Toolbar data={top} />
      </div>

      {/* ribbon 1 */}
      <div className="h-[62px] flex-none flex items-start pt-[1px] bg-gradient-to-b from-[#e8e8e8] to-[#cbcbcb] border-b border-[#b4b4b4] whitespace-nowrap overflow-hidden">
        <Row items={row1} />
      </div>

      {/* ribbon 2 */}
      <div className="h-[62px] flex-none flex border-b border-[#b0b0b0] bg-[#cfcfcf] overflow-hidden">
        <div className="flex-none w-[1297px] flex items-start pt-[3px] bg-gradient-to-b from-[#e4e4e4] to-[#c8c8c8] whitespace-nowrap">
          <Row items={row2} top="h-[30px]" />
          <div className="flex-none w-[16px] pt-[46px] flex justify-center"><Caret /></div>
        </div>
      </div>

      {/* selection bar */}
      <div className="h-[28px] flex-none flex items-center bg-gradient-to-b from-[#e6e6e6] to-[#d0d0d0] border-b border-[#aaa] overflow-hidden">
        <Combo text="无选择过滤器" className="w-[110px] -ml-[1px]" />
        <div className="w-[10px] flex-none" />
        <Combo text="整个装配" className="w-[118px]" />
        <div className="flex-none w-[30px] flex justify-center opacity-70"><Ic k="chain" s={20} /></div>
        <div className="flex-none w-[3px] h-[22px] flex justify-center"><Sep /></div>
        <div className="w-[2px] flex-none" />
        <Small k="bdim1" />
        <Small k="bart" red />
        <div className="flex-none w-[12px] flex justify-center"><Caret /></div>
        <Small k="bdim3" />
        <Small k="layerBox" />
        <div className="flex-none w-[6px] h-[22px] flex justify-center"><Sep /></div>
        <Small k="bcon1" />
        <Small k="srect" />
        <div className="flex-none w-[13px] flex justify-center"><Caret /></div>
        <div className="flex-none w-[8px] h-[22px] flex justify-center"><Sep /></div>
        <Small k="cubeW" />
        <Small k="cubeL" />
        <div className="flex-none w-[8px] h-[22px] flex justify-center"><Sep /></div>
        <Small k="art" boxed />
        <Small k="ptpt" boxed />
        <Small k="ptpt" boxed />
        <Small k="spline" />
        <Small k="bart" boxed />
        <Small k="swave" boxed />
        <Small k="arch" />
        <Small k="scirc" boxed />
        <Small k="socto" boxed />
        <Small k="scross" boxed />
      </div>

      {/* main area */}
      <div className="flex-1 min-h-0 flex">
        {/* left bars */}
        <div className="flex-none w-[67px] flex flex-col bg-[#cfcfcf] border-r border-[#f0f0f0]">
          <div className="h-[670px] flex flex-col bg-gradient-to-b from-[#e6e6e6] to-[#cdcdcd] border-b border-[#b8b8b8]">
            <div className="h-[8px] mx-[2px] mt-[2px] border-t-2 border-dotted border-[#aaa] flex-none" />
            {leftA.map(([l, k], i) => (
              <div key={l} className={`relative h-[59px] flex-none flex flex-col items-center ${i < 2 ? "w-[46px]" : "w-[56px]"}`}>
                <div className="h-[31px] flex items-center"><Ic k={k} /></div>
                <div className="text-[12px] leading-[12px] text-center whitespace-pre">{l}</div>
                {i < 2 && <Caret className="absolute left-[56px] top-[27px]" />}
              </div>
            ))}
            <div className="flex justify-between px-[1px] text-[9px] leading-[10px] mt-[-3px]"><span>◂</span><span className="font-bold pr-[2px]">≫</span></div>
          </div>
        </div>
        <div className="flex-none w-[64px] flex flex-col bg-gradient-to-b from-[#e6e6e6] to-[#cccccc] border-r-2 border-[#b4b4b4]">
          <div className="h-[8px] mx-[4px] mt-[2px] border-t-2 border-dotted border-[#aaa] flex-none" />
          {leftB.map(([l, k]) => (
            <div key={l} className="h-[59px] flex-none flex flex-col items-center">
              <div className="h-[31px] flex items-center"><Ic k={k} /></div>
              <div className="text-[12px] leading-[12px] text-center whitespace-pre">{l}</div>
            </div>
          ))}
          <div className="flex-1 flex items-end justify-between px-[9px] pb-[1px] text-[9px] leading-[10px]"><span>◂</span><span className="font-bold">≫</span></div>
        </div>

        {/* viewport */}
        <div className="relative flex-1 min-w-0 flex flex-col bg-[#d8d8d8]">
          <div className="h-[20px] flex-none flex bg-[#dcdcdc] border-b-4 border-[#5a5a5a]">
            <div className="h-[20px] w-[129px] flex-none flex items-center bg-[#5a5a5a] text-white pl-[6px] text-[10px]">
              <svg viewBox="0 0 16 16" width="15" height="15" className="flex-none"><path d="M3 2 8 1V8L13 6 14 13 7 15 2 12Z" fill="#2a70f0" stroke="#cfe0ff" strokeWidth=".7" /></svg>
              <span className="ml-[5px]">_model9.prt</span>
              <span className="ml-[7px] w-[9px] h-[11px] border-2 border-white rounded-[1px] flex-none" />
              <span className="ml-[5px] flex-none"><CloseX s={10} /></span>
            </div>
          </div>
          <div className="relative flex-1 bg-gradient-to-b from-[#b3b5b7] via-[#d5d6d7] to-[#e9ebec]">
            <Model />
            <Triad />
          </div>
        </div>

        {/* right: part navigator */}
        <div className="flex-none w-[427px] flex flex-col bg-[#e8e8e8] border-l border-[#a8a8a8] pl-[10px] pr-[4px] pt-[31px]">
          <div className="h-[680px] flex-none flex flex-col border border-[#666] bg-white">
            <div className="flex-1 min-h-0 flex">
              <div className="w-[394px] flex-none flex flex-col overflow-hidden">
                <div className="h-[18px] flex-none flex bg-gradient-to-b from-[#f0f0f0] to-[#d8d8d8] border-b border-[#bbb] text-[12px] leading-[17px]">
                  <div className="w-[200px] border-r border-[#aaa]" />
                  <div className="w-[100px] border-r border-[#aaa]" />
                  <div className="pl-[22px]">注</div>
                </div>
                <div className="h-[20px] flex-none bg-white border-b border-[#e2e2e2]" />
                <TreeRow odd>
                  <Vline />
                  <span className="relative ml-[4px]"><Exp /></span>
                  <span className="w-[5px] border-t border-dotted border-[#999]" />
                  <Tick />
                  <svg viewBox="0 0 16 16" width="16" height="16" className="ml-[1px] flex-none"><rect x="2" y="3" width="11" height="10" fill="#fff" stroke="#d03020" /><circle cx="8" cy="8" r="3" fill="#3040a0" /><circle cx="13" cy="10" r="2" fill="#222" /></svg>
                  <span className="ml-[3px]">摄像机</span>
                </TreeRow>
                <TreeRow>
                  <Vline />
                  <span className="ml-[9px] w-[9px] border-t border-dotted border-[#999]" />
                  <Folder />
                  <span className="ml-[3px]">用户表达式</span>
                </TreeRow>
                <TreeRow odd>
                  <Vline />
                  <span className="relative ml-[4px]"><Exp /></span>
                  <span className="w-[5px] border-t border-dotted border-[#999]" />
                  <Folder />
                  <span className="ml-[3px]">非时间戳记几何体</span>
                </TreeRow>
                <TreeRow>
                  <span className="relative ml-[4px]"><Exp minus /></span>
                  <span className="w-[5px] border-t border-dotted border-[#999]" />
                  <Folder />
                  <span className="ml-[3px]">模型历史记录</span>
                </TreeRow>
                {hist.map(([n, s, k, dim], i) => (
                  <TreeRow key={i} odd={i % 2 === 0} tick>
                    <span className="absolute left-[28px] top-0 h-full border-l border-dotted border-[#999]" />
                    <span className="ml-[29px] w-[11px] flex-none border-t border-dotted border-[#999]" />
                    <Chk />
                    <span className="w-[21px] flex-none flex justify-center"><Tc k={k} /></span>
                    <span className={dim ? "text-[#9a9a9a]" : ""}>{n}</span>
                    <span className={`ml-[9px] text-[11px] font-['Liberation_Sans','Noto_Sans_CJK_SC',sans-serif] ${dim ? "text-[#9a9a9a]" : ""}`}>{s}</span>
                  </TreeRow>
                ))}
              </div>
              {/* vertical scrollbar */}
              <div className="flex-1 flex flex-col items-center bg-[#f4f4f4] border-l border-[#ccc] pt-[25px]">
                <span className="block w-0 h-0 border-x-[4px] border-b-[4px] border-x-transparent border-b-[#555]" />
                <div className="mt-[6px] w-[14px] h-[472px] flex-none rounded-[2px] border border-[#aaa] bg-gradient-to-r from-[#f2f2f2] to-[#b8b8b8] flex items-center justify-center">
                  <span className="w-[7px] h-[8px] border-y-2 border-[#666]" />
                </div>
                <span className="mt-auto mb-[4px] block w-0 h-0 border-x-[4px] border-t-[4px] border-x-transparent border-t-[#555]" />
              </div>
            </div>
            {/* horizontal scrollbar */}
            <div className="h-[18px] flex-none flex items-center bg-[#f4f4f4] pl-[4px]">
              <span className="block w-0 h-0 border-y-[4px] border-r-[4px] border-y-transparent border-r-[#555]" />
              <div className="ml-[11px] w-[349px] h-[15px] rounded-[2px] border border-[#aaa] bg-gradient-to-b from-[#f2f2f2] to-[#b8b8b8] flex items-center justify-center">
                <span className="w-[8px] h-[7px] border-x-2 border-[#666]" />
              </div>
              <span className="ml-[18px] block w-0 h-0 border-y-[4px] border-l-[4px] border-y-transparent border-l-[#555]" />
            </div>
          </div>
          <div className="relative mt-[5px] h-px bg-[#999]">
            <span className="absolute left-[167px] -top-[3px] w-[78px] h-[7px] bg-[#c0c0c0] rounded-[2px] border border-[#aaa]" />
          </div>
        </div>
      </div>

      {/* bottom toolbar */}
      <div className="h-[39px] flex-none flex items-start bg-gradient-to-b from-[#e8e8e8] to-[#d0d0d0] border-t-2 border-[#a8a8a8] overflow-hidden whitespace-nowrap">
        <div className="flex-none self-stretch flex items-start pt-[17px]">
          <div className="flex-none w-[30px] flex justify-center"><Ic k="sketchS" /></div>
          <div className="flex-none w-[28px] flex justify-center"><Ic k="flag" /></div>
          <span className="flex-none w-[54px] text-[12px] leading-[20px] text-[#9a9a9a] text-center">完成草图</span>
          <Toolbar data={bottomIcons} up="-mt-[17px]" />
        </div>
        <div className="flex-none w-[32px]" />
        <span className="flex-none w-[14px] pt-[3px] text-[11px] leading-[12px] font-bold">»</span>
        <span className="flex-none w-[3px] ml-[1px] mt-[4px] h-full border-l-2 border-dotted border-[#999]" />
        <div className="flex-none self-stretch flex items-start pt-[4px]">
          {[["包容体", "bwrap"], ["分割小平\n面", "bsplit"], ["剪断小平\n面", "bcutf"], ["清理小平\n面", "bclean"], ["抽样优化", "bsample"], ["细分小平\n面", "bsubdiv"]].map(([l, k]) => (
            <Item key={k} label={l} k={k} top="h-[30px]" />
          ))}
          <span className="flex-none w-[25px] text-[11px] leading-[12px] font-bold text-right">»</span>
          <span className="flex-none w-[7px] ml-[3px] h-full border-l-2 border-dotted border-[#999]" />
          {[["拉面对刻", "bdraft"], ["用户定义", "bcustom"], ["缩置曲面", "bbend"]].map(([l, k]) => (
            <Item key={k} label={l} k={k} top="h-[30px]" />
          ))}
          <span className="flex-none w-[8px] h-full flex justify-center"><Sep /></span>
          <Item label="修剪片体" k="btrim" top="h-[30px]" />
          <Item label="修剪和延" k="btrimx" top="h-[30px]" />
          <Item label="" k="bred" top="h-[30px]" w="w-[50px]" />
          <Item label="" k="bcol" top="h-[30px]" />
        </div>
      </div>

      {/* PMI floating toolbar */}
      <div className="absolute left-[728px] top-[188px] w-[812px] h-[93px] flex flex-col rounded-[4px] overflow-hidden bg-[#161616] border-t-2 border-[#6a6a6a]">
        <div className="h-[20px] flex-none flex items-center text-white">
          <span className="ml-[9px] text-[12px] font-bold">PMI</span>
          <Caret className="ml-auto mr-[7px] !border-t-white" />
          <span className="w-[20px] h-[19px] flex items-center justify-center border-l border-[#888]"><CloseX s={13} /></span>
        </div>
        <div className="h-[62px] flex-none flex items-start pl-[2px] pt-[3px] bg-gradient-to-b from-[#e8e8e8] to-[#cccccc] whitespace-nowrap">
          <Row items={pmi} top="h-[30px]" />
        </div>
        <div className="flex-1 border-t border-[#555]" />
      </div>

      {/* watermark */}
      <svg viewBox="0 0 70 84" className="absolute left-[1355px] top-[888px] w-[70px] h-[84px] opacity-70">
        <path d="M35 0 70 20V64L35 84 0 64V20Z" fill="#6ab8e8" />
        <path d="M35 0 70 20 35 40Z" fill="#cbe8f8" />
        <path d="M35 18 56 30V54L35 66 14 54V30Z" fill="none" stroke="#e0f0fa" strokeWidth="5" />
        <path d="M35 42V66M14 30 35 42 56 30" stroke="#e0f0fa" strokeWidth="4" fill="none" />
      </svg>
      <div className="absolute left-[1431px] top-[898px] text-[41px] leading-[46px] font-bold text-white/75 [text-shadow:0_0_1px_#aaa] whitespace-nowrap font-['Liberation_Sans','Noto_Sans_CJK_SC',sans-serif]">3D世界网</div>
      <div className="absolute left-[1444px] top-[945px] text-[13px] leading-[16px] tracking-[1.5px] text-white/85 [text-shadow:0_0_1px_#999] whitespace-nowrap font-['Liberation_Sans',sans-serif]">WWW.3DSJW.COM</div>

      {/* language bar */}
      <div className="absolute left-[1522px] top-[962px] w-[114px] h-[22px] flex items-center bg-gradient-to-b from-[#555] to-[#333] text-white">
        <span className="ml-[6px] w-[8px] h-[12px] border-x-2 border-dotted border-[#999]" />
        <span className="ml-[6px] text-[12px]">CH</span>
        <span className="ml-[6px] w-[16px] h-[17px] bg-[#f05a10] rounded-[3px] text-[14px] leading-[17px] text-center font-bold">S</span>
        <span className="ml-[7px] w-[16px] h-[16px] rounded-full bg-[#10308a] border border-white text-[11px] leading-[14px] text-center font-bold">?</span>
        <span className="ml-[10px] w-[6px] h-[2px] bg-white" />
      </div>
    </div>
  );
}
